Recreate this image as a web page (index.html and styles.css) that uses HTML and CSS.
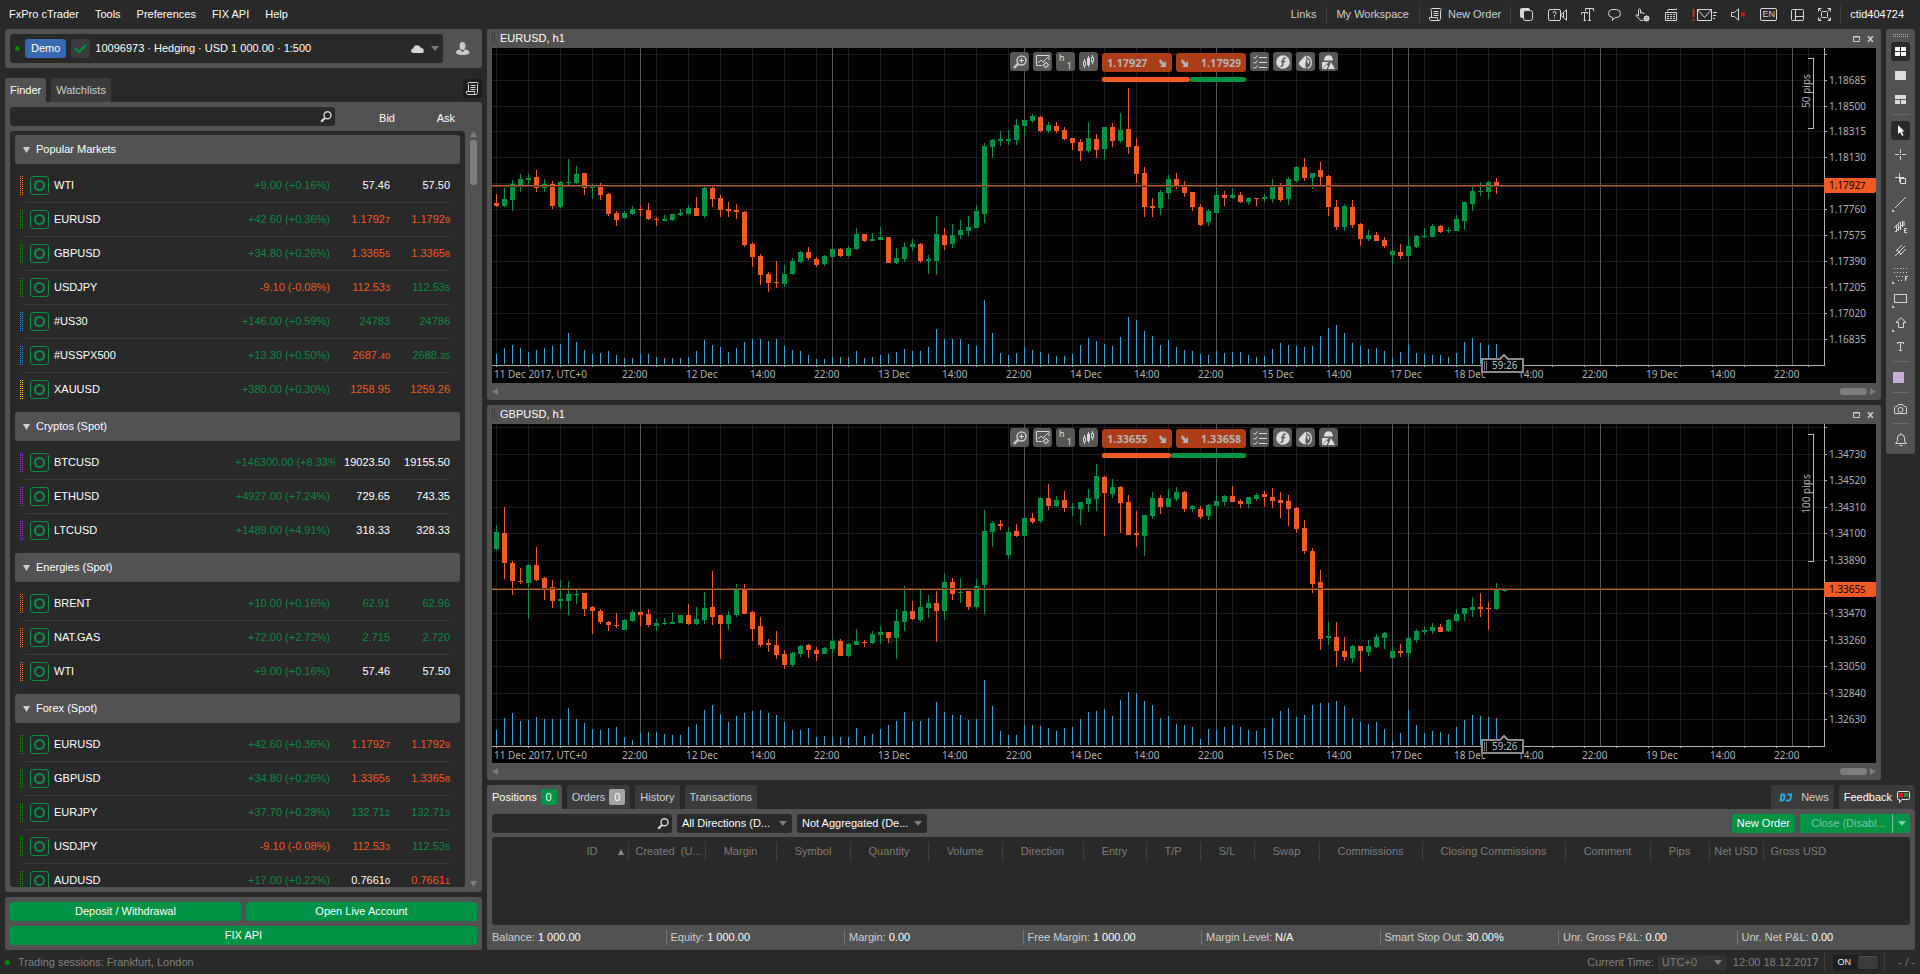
FILE: index.html
```html
<!DOCTYPE html>
<html lang="en">
<head>
<meta charset="utf-8">
<title>FxPro cTrader</title>
<link rel="stylesheet" href="styles.css">
</head>
<body>
<div class="app">
  <header class="topbar">
    <nav class="menu" aria-label="Main">
      <button>FxPro cTrader</button>
      <button>Tools</button>
      <button>Preferences</button>
      <button>FIX API</button>
      <button>Help</button>
    </nav>
    <div class="top-tools">
      <button class="top-link">Links</button>
      <span class="rule"></span>
      <button class="top-link">My Workspace</button>
      <span class="rule"></span>
      <button class="top-link with-icon">
        <svg class="line" width="13" height="13" viewBox="0 0 13 13"><path d="M2.500 9.500V2.500L1.500 1.500L2.500.5H11.500L12.500 1.500L11.500 2.500V10.500L10.500 12.500H1.500L.5 11.500V9.500H8.500V11.500L9.500 12.500M4.500 3.500H9.500M4.500 5.500H9.500M4.500 7.500H9.500"/></svg>
        New Order
      </button>
      <span class="rule"></span>
      <div class="top-icons">
        <button aria-label="Copy"><svg width="14" height="13" viewBox="0 0 14 13"><rect x="0" y="0" width="10" height="10" rx="2" fill="#d8d8d8"/><rect x="3.500" y="2.500" width="9" height="10" rx="2" fill="#292929" stroke="#d8d8d8"/></svg></button>
        <button aria-label="Video help"><svg class="line" width="19" height="12" viewBox="0 0 19 12"><rect x=".5" y=".5" width="12" height="11" rx="1.500"/><path d="M12.500 6 18.500.8V11.200ZM15.500 3.500V8.500M5 4Q5 2.500 6.500 2.500T8 4Q8 5 6.500 6V7.500M6.500 8.500V9.500"/></svg></button>
        <button aria-label="Text size"><svg class="line" width="13" height="13" viewBox="0 0 13 13"><path d="M4.500 3V.5H12.500V3M8.500.5V12.500M7 12.500H10M.5 6.500V4.500H6.500V6M3.500 4.500V12.500M2.500 12.500H5"/></svg></button>
        <button aria-label="Chat"><svg class="line" width="13" height="12" viewBox="0 0 13 12"><path d="M4.500 8.500V11.500L7 8.500H9Q12.500 8 12.500 4.500T8.500.5H4Q.5 1 .5 4.500T4.500 8.500Z"/></svg></button>
        <button aria-label="Quick trade"><svg class="line" width="15" height="14" viewBox="0 0 15 14"><path d="M8.500 12.500H6L1.500 8.500Q.5 7 1.500 6.500L3.500 8V1.500Q4.500 0 5.500 1.500V5.500M5.500 4.500Q7.500 3.500 7.500 5.500M7.500 5Q9 4.500 9.500 6"/><circle cx="11.500" cy="10.500" r="2.300"/><path d="M11.500 7V14M8 10.500H15M9 8 14 13M14 8 9 13" stroke-width=".8"/></svg></button>
        <button aria-label="Terminal"><svg class="line" width="14" height="13" viewBox="0 0 14 13"><path d="M1.500 4.500H12.500V12.500H1.500ZM3.500 3.500V2.500Q3.500 1.500 5 1.500H12.500V.5M3 6.500H11M3 8.500H11M3 10.500H11"/><path d="M5.500 5V12M8.500 5V12" stroke="#292929"/></svg></button>
        <button aria-label="Messages"><svg class="line" width="25" height="12" viewBox="0 0 25 12"><path d="M1.500 0V8M1.500 10V12" stroke="#c1342a" stroke-width="2"/><path d="M5.500.5H19.500V11.500H5.500ZM5.500.5 12.500 8.500 19.500.5M21 3.500H25M21 6.500H24M21 9.500H23"/></svg></button>
        <button aria-label="Sound"><svg class="line" width="15" height="13" viewBox="0 0 15 13"><path d="M.5 4.500H3.500L7.500.8V12.200L3.500 8.500H.5Z"/><path d="M10 4.500 14 8.500M14 4.500 10 8.500" stroke="#d01f1f" stroke-width="1.500"/></svg></button>
        <button class="lang" aria-label="Language">EN</button>
        <button aria-label="Layout"><svg class="line" width="13" height="12" viewBox="0 0 13 12"><rect x=".5" y=".5" width="12" height="11" rx="1"/><path d="M4.500.5V11.500M4.500 7.500H12.500"/></svg></button>
        <button aria-label="Full screen"><svg class="line" width="13" height="13" viewBox="0 0 13 13"><rect x="3.500" y="3.500" width="6" height="6" rx="1"/><path d="M.5 3.500V.5H3.500M9.500.5H12.500V3.500M12.500 9.500V12.500H9.500M3.500 12.500H.5V9.500M1 1 3 3M12 1 10 3M12 12 10 10M1 12 3 10"/></svg></button>
      </div>
      <span class="rule"></span>
      <button class="user-id">ctid404724</button>
    </div>
  </header>

  <div class="body">
    <aside class="side">
      <section class="card account">
        <div class="account-box">
          <span class="dot"></span>
          <span class="demo">Demo</span>
          <span class="check"><svg width="13" height="9" viewBox="0 0 13 9"><path d="M1 4.500 5 8 12 .8" fill="none" stroke="#009245" stroke-width="2"/></svg></span>
          <span class="account-text">10096973 · Hedging · USD 1 000.00 · 1:500</span>
          <svg class="cloud" width="13" height="8" viewBox="0 0 13 8"><path d="M2.500 8Q0 8 0 5.800T2.300 3.500Q3 .3 6 .3T9.800 3Q12.800 3.200 12.800 5.700T10.500 8Z" fill="#d6d6d6"/></svg>
          <svg width="8" height="5" viewBox="0 0 8 5"><path d="M0 0H8L4 5Z" fill="#7d7d7d"/></svg>
        </div>
        <button class="person" aria-label="Profile"><svg width="14" height="14" viewBox="0 0 14 14"><ellipse cx="6.500" cy="4" rx="3" ry="4" fill="#c9c9c9"/><path d="M0 11Q0 7.500 4 7.500L6.500 10 9 7.500Q13 7.500 13.500 11 12 13 6.800 13T0 11Z" fill="#c9c9c9"/></svg></button>
      </section>

      <div class="tabs side-tabs" role="tablist">
        <button class="tab on" role="tab">Finder</button>
        <button class="tab" role="tab">Watchlists</button>
        <button class="notes" aria-label="Orders list"><svg class="line" width="13" height="13" viewBox="0 0 13 13"><path d="M2.500 9.500V2.500L1.500 1.500L2.500.5H11.500L12.500 1.500L11.500 2.500V10.500L10.500 12.500H1.500L.5 11.500V9.500H8.500V11.500L9.500 12.500M4.500 3.500H9.500M4.500 5.500H9.500M4.500 7.500H9.500"/></svg></button>
      </div>
      <section class="card finder">
        <div class="finder-head">
          <label class="search"><input type="search" aria-label="Find symbol"><svg width="12" height="12" viewBox="0 0 12 12"><circle cx="7.500" cy="4.200" r="3.500" fill="none" stroke="#d6d6d6" stroke-width="1.400"/><path d="M5 7 1.200 10.800" stroke="#d6d6d6" stroke-width="2.200"/></svg></label>
          <span class="col-bid">Bid</span>
          <span class="col-ask">Ask</span>
        </div>
        <div class="finder-main">
          <div class="symbols" id="symbols"></div>
          <div class="vscroll">
            <svg width="7" height="6" viewBox="0 0 7 6"><path d="M3.500 0 7 6H0Z" fill="#7d7d7d"/></svg>
            <span class="vthumb"></span>
            <svg class="down" width="7" height="6" viewBox="0 0 7 6"><path d="M3.500 6 7 0H0Z" fill="#7d7d7d"/></svg>
          </div>
        </div>
      </section>

      <section class="card funding">
        <button class="green">Deposit / Withdrawal</button>
        <button class="green">Open Live Account</button>
        <button class="green wide">FIX API</button>
      </section>
    </aside>

    <main class="main">
      <div class="upper">
        <div class="charts" id="charts"></div>
        <div class="toolbar" role="toolbar" aria-label="Chart tools">
          <span class="grip"></span>
          <button class="on" aria-label="Grid"><svg width="13" height="13" viewBox="0 0 13 13" fill="#fff"><path d="M1 2H6V6H1ZM7 2H12V6H7ZM1 7H6V11H1ZM7 7H12V11H7Z"/></svg></button>
          <button aria-label="Single"><svg width="11" height="9" viewBox="0 0 11 9"><path d="M0 0H11V9H0Z" fill="#dcdcdc"/></svg></button>
          <button aria-label="Split"><svg width="11" height="9" viewBox="0 0 11 9"><path d="M0 0H11V4H0ZM0 5H5V9H0ZM6 5H11V9H6Z" fill="#dcdcdc"/></svg></button>
          <span class="hr"></span>
          <button class="on" aria-label="Pointer"><svg width="8" height="11" viewBox="0 0 8 11"><path d="M1 0 7.500 6.500H4.800L6.500 10.300 5 11 3.300 7.200 1 9Z" fill="#fff"/></svg></button>
          <button aria-label="Crosshair"><svg class="line" width="11" height="11" viewBox="0 0 11 11"><path d="M5.500 0V4M5.500 7V11M0 5.500H4M7 5.500H11M5 5.500H6"/></svg></button>
          <button aria-label="Measure"><svg class="line" width="11" height="11" viewBox="0 0 11 11"><path d="M4.500 0V9M0 4.500H9"/><rect x="5.500" y="5.500" width="5" height="5" fill="#525252"/></svg></button>
          <button class="more" aria-label="Trend line"><svg class="line" width="11" height="11" viewBox="0 0 11 11"><path d="M0 11 11 0"/></svg></button>
          <button aria-label="Equidistant channel"><svg class="line" width="14" height="12" viewBox="0 0 14 12"><path d="M0 7 6 1M2.500 5V11M4.500 3.500V9.500M6.500 1V9M8.500 0V6M1 11 8 4M10 0V5M13 7.500H10.500V11.500H13M10.500 9.500H12.500"/></svg></button>
          <button aria-label="Andrews pitchfork"><svg class="line" width="11" height="11" viewBox="0 0 11 11"><path d="M0 11 4 7M1 6 7 0M3 8 10 1M5 10 11 4M2 5 6 9"/></svg></button>
          <button class="more" aria-label="Fibonacci"><svg class="line" width="14" height="14" viewBox="0 0 14 14" shape-rendering="crispEdges"><path d="M0 .5H14M0 4.500H14M2 8.500H10M4 12.500H10" stroke-dasharray="1 2"/><path d="M11.500 13V8.500H14M11.500 10.500H13"/></svg></button>
          <button class="more" aria-label="Rectangle"><svg class="line" width="13" height="9" viewBox="0 0 13 9"><rect x=".5" y=".5" width="12" height="8"/></svg></button>
          <button class="more" aria-label="Arrow"><svg class="line" width="12" height="11" viewBox="0 0 12 11"><path d="M6 .7 11 5.500H8.500V10.500H3.500V5.500H1Z"/></svg></button>
          <button aria-label="Text"><svg class="line" width="7" height="9" viewBox="0 0 7 9"><path d="M.5 2V.5H6.500V2M3.500.5V8.500M2 8.500H5"/></svg></button>
          <span class="hr"></span>
          <button class="swatch" aria-label="Colour"><span></span></button>
          <span class="hr"></span>
          <button aria-label="Snapshot"><svg class="line" width="13" height="10" viewBox="0 0 13 10"><path d="M.5 3.500Q.5 2.500 1.500 2.500H3L4.500.5H8.500L10 2.500H11.500Q12.500 2.500 12.500 3.500V9.500H.5Z"/><circle cx="6.500" cy="5.800" r="2.500"/></svg></button>
          <span class="hr"></span>
          <button aria-label="Alerts"><svg class="line" width="12" height="13" viewBox="0 0 12 13"><path d="M.5 10.500H11.500L9.500 8V5Q9.500 1.500 6 1.500T2.500 5V8ZM6 0V1.500M4.500 12.500H7.500"/></svg></button>
        </div>
      </div>

      <section class="lower">
        <div class="tabs" role="tablist">
          <button class="tab on" role="tab">Positions <span class="badge">0</span></button>
          <button class="tab" role="tab">Orders <span class="badge grey">0</span></button>
          <button class="tab" role="tab">History</button>
          <button class="tab" role="tab">Transactions</button>
          <button class="tab news" role="tab"><svg width="14" height="9" viewBox="0 0 14 9"><path d="M2.500 1.500H4.500Q5.800 1.500 5.500 3.500L5.200 5.500Q4.800 7.500 3.500 7.500H1.500ZM8.500 1.500H12.200L11.500 6Q11.200 7.500 9.500 7.500H7" fill="none" stroke="#29abe2" stroke-width="2"/></svg>News</button>
          <button class="tab feedback" role="tab">Feedback<svg width="13" height="12" viewBox="0 0 13 12"><path d="M2.500 8.500H1.500Q.5 8.500.5 7.500V1.500Q.5.5 1.500.5H11.500Q12.500.5 12.500 1.500V7.500Q12.500 8.500 11.500 8.500H5L2.500 11.500Z" fill="none" stroke="#e6e6e6"/><path d="M2 2H6V6H2Z" fill="#e01b1b"/><path d="M7 2H11V6H7Z" fill="#009245"/></svg></button>
        </div>
        <div class="card trade">
          <div class="filters">
            <label class="search"><input type="search" aria-label="Search positions"><svg width="12" height="12" viewBox="0 0 12 12"><circle cx="7.500" cy="4.200" r="3.500" fill="none" stroke="#d6d6d6" stroke-width="1.400"/><path d="M5 7 1.200 10.800" stroke="#d6d6d6" stroke-width="2.200"/></svg></label>
            <span class="pick directions"><select aria-label="Directions"><option>All Directions (D...</option></select></span>
            <span class="pick aggregation"><select aria-label="Aggregation"><option>Not Aggregated (De...</option></select></span>
            <button class="green new-order">New Order</button>
            <span class="split"><button class="green close" disabled>Close (Disabl...</button><button class="green arrow" aria-label="Close options"><svg width="8" height="5" viewBox="0 0 8 5"><path d="M0 0H8L4 5Z" fill="#7fc8a1"/></svg></button></span>
          </div>
          <div class="grid-box">
            <table class="positions">
              <thead><tr>
                <th><span>ID <svg width="6" height="6" viewBox="0 0 6 6"><path d="M3 0 6 6H0Z" fill="#8a8a8a"/></svg></span></th>
                <th>Created&nbsp; (U...</th><th>Margin</th><th>Symbol</th><th>Quantity</th><th>Volume</th><th>Direction</th><th>Entry</th><th>T/P</th><th>S/L</th><th>Swap</th><th>Commissions</th><th>Closing Commissions</th><th>Comment</th><th>Pips</th><th>Net USD</th><th>Gross USD</th>
              </tr></thead>
            </table>
          </div>
          <div class="totals">
            <span>Balance: <b>1 000.00</b></span>
            <span>Equity: <b>1 000.00</b></span>
            <span>Margin: <b>0.00</b></span>
            <span>Free Margin: <b>1 000.00</b></span>
            <span>Margin Level: <b>N/A</b></span>
            <span>Smart Stop Out: <b>30.00%</b></span>
            <span>Unr. Gross P&amp;L: <b>0.00</b></span>
            <span>Unr. Net P&amp;L: <b>0.00</b></span>
          </div>
        </div>
      </section>
    </main>
  </div>

  <footer class="footer">
    <span class="dot"></span>
    <span class="sessions">Trading sessions: Frankfurt, London</span>
    <label class="clock" for="tz">Current Time:</label>
    <span class="pick tz"><select id="tz"><option>UTC+0</option></select></span>
    <span class="now">12:00 18.12.2017</span>
    <span class="rule"></span>
    <button class="toggle" aria-pressed="true"><span>ON</span><i></i></button>
    <span class="rule"></span>
    <span class="ping">- / -</span>
  </footer>
</div>
<script src="app.js"></script>
</body>
</html>
```
FILE: styles.css
```css
*, *::before, *::after { box-sizing: border-box; }

:root {
  --bg: #292929;
  --panel: #525252;
  --green: #009245;
  --orange: #f15a24;
  --text: #fff;
  --soft: #cfcfcf;
  --dim: #808080;
}

body {
  margin: 0;
  background: var(--bg);
  color: var(--text);
  font: 11px/15px "Liberation Sans", Arial, sans-serif;
}

button, input, select {
  font: inherit;
  color: inherit;
  background: none;
  border: 0;
  padding: 0;
  margin: 0;
}

button { white-space: nowrap; }
svg { display: block; flex: none; }
.line { fill: none; stroke: #d8d8d8; stroke-width: 1; }

.app { display: flex; flex-direction: column; height: 100vh; overflow: hidden; }

/* Top bar */
.topbar {
  display: flex;
  flex: 0 0 29px;
  align-items: center;
  justify-content: space-between;
  padding: 0 16px 0 9px;
}
.menu { display: flex; gap: 16px; }
.top-tools { display: flex; align-items: center; gap: 9px; color: var(--soft); }
.top-link { padding-right: 1px; }
.with-icon { display: flex; align-items: center; gap: 6px; padding: 0; }
.rule { width: 1px; height: 18px; background: #404040; }
.top-icons { display: flex; align-items: center; gap: 14px; }
.lang {
  width: 17px;
  height: 13px;
  border: 1px solid #d8d8d8;
  border-radius: 2px;
  font-size: 9px;
  line-height: 11px;
}
.user-id { color: #fff; }

/* Frame */
.body { display: flex; flex: 1; gap: 5px; padding: 0 5px; min-height: 0; }
.card { background: var(--panel); border-radius: 3px; }
.side { display: flex; flex: 0 0 477px; flex-direction: column; min-height: 0; }
.main { display: flex; flex: 1; flex-direction: column; gap: 5px; min-width: 0; }

/* Account */
.account { display: flex; flex: 0 0 39px; padding: 5px; }
.account-box {
  display: flex;
  flex: 1;
  align-items: center;
  gap: 5px;
  padding: 0 4px 0 5px;
  background: var(--bg);
  border-radius: 3px;
}
.dot { width: 5px; height: 5px; border-radius: 50%; background: #008a00; }
.demo, .check { height: 19px; border-radius: 3px; }
.demo { padding: 2px 6px; background: #3769b3; }
.check { display: flex; align-items: center; justify-content: center; width: 19px; background: #3b3b3b; }
.account-text { flex: 1; }
.cloud { margin-right: 2px; }
.person { width: 34px; display: flex; align-items: center; justify-content: center; padding-left: 5px; }

/* Tabs */
.tabs { display: flex; flex: 0 0 24px; gap: 5px; }
.side-tabs { margin-top: 10px; }
.tab {
  display: flex;
  align-items: center;
  gap: 4px;
  height: 24px;
  padding: 0 5px;
  background: #3b3b3b;
  border-radius: 3px 3px 0 0;
  color: var(--soft);
}
.tab.on { background: var(--panel); color: #fff; }
.notes {
  display: flex;
  align-items: center;
  justify-content: center;
  width: 19px;
  height: 19px;
  margin: 1px 0 0 auto;
  background: #1d1d1d;
  border-radius: 2px;
}
.badge {
  width: 16px;
  height: 16px;
  background: var(--green);
  border-radius: 2px;
  color: #fff;
  line-height: 16px;
  text-align: center;
}
.badge.grey { background: #a3a3a3; }
.news { margin-left: auto; gap: 8px; padding-left: 8px; }
.feedback { gap: 5px; color: #fff; }

/* Finder */
.finder { display: flex; flex: 1; flex-direction: column; min-height: 0; padding: 5px 0 5px 5px; border-radius: 0 3px 3px 3px; }
.finder-head { display: flex; flex: 0 0 19px; margin-bottom: 5px; }
.search {
  display: flex;
  align-items: center;
  flex: 1;
  height: 19px;
  padding-right: 3px;
  background: var(--bg);
  border-radius: 3px;
}
.search input { flex: 1; min-width: 0; padding: 0 5px; outline: 0; appearance: none; }
.col-bid, .col-ask { width: 60px; padding-top: 4px; text-align: right; }
.col-ask { margin-right: 27px; }
.finder-main { display: flex; flex: 1; min-height: 0; }
.symbols { flex: 1; min-width: 0; overflow: hidden; padding: 4px 5px; background: var(--bg); border-radius: 3px; }
.group {
  display: flex;
  align-items: center;
  gap: 6px;
  width: 100%;
  height: 29px;
  padding-left: 8px;
  background: var(--panel);
  border-radius: 3px;
}
.rows { width: 100%; padding: 5px; list-style: none; margin: 0; }
.row { display: flex; align-items: center; height: 34px; border-bottom: 1px solid transparent; position: relative; }
.row::after {
  content: "";
  position: absolute;
  left: 5px;
  right: 5px;
  bottom: -1px;
  height: 1px;
  background: #3b3b3b;
}
.row:last-child::after { display: none; }
.strip {
  width: 3px;
  height: 19px;
  background:
    linear-gradient(90deg, transparent 1px, var(--bg) 1px 2px, transparent 2px),
    repeating-linear-gradient(currentColor 0 1px, transparent 1px 2px);
}
.ring {
  display: flex;
  align-items: center;
  justify-content: center;
  width: 19px;
  height: 19px;
  margin: 0 5px 0 7px;
  border: 1px solid #0d8f48;
  border-radius: 3px;
}
.ring::before { content: ""; width: 11px; height: 11px; border: 2px solid #0d8f48; border-radius: 50%; }
.name { flex: 1; }
.change { width: 105px; overflow: hidden; text-align: right; padding-right: 5px; white-space: nowrap; }
.change.long { padding-right: 0; text-align: left; width: 100px; }
.price { width: 60px; text-align: right; margin-left: -5px; }
.price:last-child { margin: 0 5px 0 0; }
.price small { font-size: 9px; line-height: 1; }
.up { color: #0d8a45; }
.down-price { color: var(--orange); }
.vscroll { display: flex; flex-direction: column; align-items: center; width: 17px; gap: 3px; }
.vthumb { width: 7px; height: 45px; background: #7d7d7d; border-radius: 3px; }
.vscroll .down { margin-top: auto; }

/* Funding */
.funding { display: grid; grid-template-columns: 1fr 1fr; gap: 5px; margin-top: 5px; padding: 5px; }
.green { height: 19px; background: var(--green); border-radius: 3px; color: #fff; }
.wide { grid-column: span 2; }

/* Charts */
.upper { display: flex; flex: 1; gap: 5px; min-height: 0; align-items: flex-start; }
.charts { display: flex; flex: 1; flex-direction: column; gap: 5px; min-width: 0; height: 100%; }
.chart { display: flex; flex: 1 1 371px; flex-direction: column; min-height: 0; padding: 0 5px; }
.chart:last-child { flex-basis: 375px; }
.chart-head { display: flex; flex: 0 0 19px; align-items: center; gap: 5px; }
.chart-head h2 { flex: 1; margin: 0; font-size: 11px; font-weight: normal; }
.chart-head button { margin-right: 2px; }
.drag {
  width: 3px;
  height: 11px;
  background:
    linear-gradient(90deg, transparent 1px, var(--panel) 1px 2px, transparent 2px),
    repeating-linear-gradient(#2b2b2b 0 1px, transparent 1px 2px);
}
.canvas { position: relative; flex: 1; min-height: 0; overflow: hidden; background: #000; }
.plot { position: absolute; inset: 0; }
.plot text { font: 10px "Noto Sans", sans-serif; fill: #b0b0b0; }
.plot .on-price { fill: #000; }
.plot .on-price tspan { font-size: 9px; }
.plot .countdown { font-size: 10px; fill: #b8c4cc; }
.chart-tools {
  position: absolute;
  top: 4px;
  left: 0;
  right: 20px;
  display: flex;
  justify-content: center;
  gap: 4px;
}
.ctool {
  display: flex;
  align-items: center;
  justify-content: center;
  width: 19px;
  height: 19px;
  background: #575757;
  border-radius: 3px;
}
.period { justify-content: space-between; padding: 0 3px; font: 9px/11px "Noto Sans", sans-serif; color: #ddd; }
.period span:first-child { align-self: flex-start; }
.period span:last-child { align-self: flex-end; }
.quotes { display: grid; grid-template-columns: 70px 70px; gap: 5px 4px; padding-top: 1px; }
.quote {
  display: flex;
  align-items: center;
  justify-content: space-between;
  height: 19px;
  padding: 0 5px;
  background: #ab3e19;
  border-radius: 3px;
  color: #b4b4b4;
  font: bold 11px/16px "Noto Sans", sans-serif;
}
.quote small { font-size: 10px; line-height: 1; }
.mood { grid-column: span 2; display: flex; }
.mood span { height: 5px; border-radius: 2px; background: var(--green); flex: 1; }
.mood span:first-child { flex: none; background: var(--orange); }
.hscroll { display: flex; flex: 0 0 17px; align-items: center; gap: 3px; }
.hthumb { width: 27px; height: 7px; margin-left: auto; background: #7d7d7d; border-radius: 3px; }

/* Drawing toolbar */
.toolbar {
  display: flex;
  flex-direction: column;
  align-items: center;
  gap: 5px;
  width: 29px;
  padding: 5px 0;
  background: var(--panel);
  border-radius: 3px;
}
.toolbar button { position: relative; display: flex; align-items: center; justify-content: center; width: 19px; height: 19px; border-radius: 3px; }
.toolbar .on { background: #292929; }
.toolbar .more::after { content: ""; position: absolute; left: 1px; bottom: 0; border-left: 3px solid #d8d8d8; border-top: 3px solid transparent; }
.grip {
  width: 15px;
  height: 3px;
  background:
    linear-gradient(transparent 1px, var(--panel) 1px 2px, transparent 2px),
    repeating-linear-gradient(90deg, #b0b0b0 0 1px, transparent 1px 2px);
}
.hr { width: 18px; height: 1px; margin-bottom: 1px; background: #6a6a6a; }
.swatch span { width: 11px; height: 11px; margin-right: 4px; background: #c9aedb; }

/* Positions */
.lower { flex: 0 0 165px; }
.trade { padding: 5px 5px 0; border-radius: 0 3px 3px 3px; }
.filters { display: flex; gap: 5px; }
.filters .search { flex: 0 0 180px; }
.pick { position: relative; display: flex; height: 19px; background: var(--bg); border-radius: 3px; }
.pick select { width: 100%; padding: 0 5px; appearance: none; outline: 0; }
.pick::after {
  content: "";
  position: absolute;
  right: 5px;
  top: 7px;
  border: 4px solid transparent;
  border-top: 5px solid #7d7d7d;
  border-bottom: 0;
  pointer-events: none;
}
.directions { width: 115px; }
.aggregation { width: 130px; }
.new-order { margin-left: auto; padding: 0 5px; }
.split { display: flex; gap: 1px; background: #6cc095; border-radius: 3px; }
.close { width: 92px; border-radius: 3px 0 0 3px; color: #7fc8a1; padding-left: 5px; }
.arrow { display: flex; align-items: center; justify-content: center; width: 17px; border-radius: 0 3px 3px 0; }
.grid-box { height: 88px; margin-top: 4px; padding-top: 5px; background: var(--bg); border-radius: 3px; }
.positions { width: 100%; table-layout: fixed; border-collapse: collapse; color: #7d7d7d; }
.positions th { height: 19px; padding: 0; border-right: 1px solid #404040; font-weight: normal; white-space: nowrap; width: 5%; }
.positions th span { display: flex; align-items: center; justify-content: flex-end; gap: 20px; padding-right: 4px; }
.positions th:nth-child(1) { width: 136px; }
.positions th:nth-child(2) { width: 77px; text-align: left; padding-left: 7px; }
.positions th:nth-child(3) { width: 71px; }
.positions th:nth-child(4) { width: 74px; }
.positions th:nth-child(5) { width: 78px; }
.positions th:nth-child(6) { width: 74px; }
.positions th:nth-child(7) { width: 81px; }
.positions th:nth-child(8) { width: 63px; }
.positions th:nth-child(9) { width: 54px; }
.positions th:nth-child(10) { width: 54px; }
.positions th:nth-child(11) { width: 65px; }
.positions th:nth-child(12) { width: 103px; }
.positions th:nth-child(13) { width: 143px; }
.positions th:nth-child(14) { width: 85px; }
.positions th:nth-child(15) { width: 59px; }
.positions th:nth-child(16) { width: 54px; }
.positions th:nth-child(17) { width: auto; border: 0; text-align: left; padding-left: 7px; }
.totals { display: grid; grid-template-columns: repeat(8, 1fr); height: 25px; margin: 0 -5px; align-items: center; color: var(--soft); }
.totals span { padding-left: 4px; border-left: 1px solid #757575; }
.totals span:first-child { border-color: transparent; }
.totals b { color: #fff; font-weight: normal; }

/* Footer */
.footer { display: flex; flex: 0 0 24px; align-items: center; padding: 0 5px; color: var(--dim); }
.sessions { flex: 1; margin-left: 8px; }
.tz { width: 69px; height: 15px; margin: 0 6px 0 4px; background: #333; }
.tz select { padding: 0 4px; }
.tz::after { top: 5px; }
.now { margin-right: 5px; }
.toggle { display: flex; align-items: center; justify-content: space-between; width: 46px; height: 15px; margin: 0 5px 0 8px; padding: 1px 1px 1px 5px; background: #1f1f1f; border-radius: 2px; color: #eee; font-size: 9px; line-height: 12px; }
.toggle i { width: 20px; height: 13px; background: #3b3b3b; border-top: 1px solid #555; border-radius: 2px; }
.ping { margin-left: 14px; }
```
FILE: app.js
```js
/* Symbol list: name, change, bid, ask. A "~" marks the small trailing digits. */
const GROUPS = [
  ["Popular Markets", [
    ["WTI", "+9.00 (+0.16%)", "57.46", "57.50", "#f7741c"],
    ["EURUSD", "+42.60 (+0.36%)", "-1.1792~7", "-1.1792~9", "#0a9a0a"],
    ["GBPUSD", "+34.80 (+0.26%)", "-1.3365~5", "-1.3365~8", "#0a9a0a"],
    ["USDJPY", "-9.10 (-0.08%)", "-112.53~3", "+112.53~5", "#0a9a0a"],
    ["#US30", "+146.00 (+0.59%)", "+24783", "+24786", "#2196f3"],
    ["#USSPX500", "+13.30 (+0.50%)", "-2687.~40", "+2688.~35", "#2196f3"],
    ["XAUUSD", "+380.00 (+0.30%)", "-1258.95", "-1259.26", "#f2e12a"]]],
  ["Cryptos (Spot)", [
    ["BTCUSD", "+146300.00 (+8.33%)", "19023.50", "19155.50", "#a537e0"],
    ["ETHUSD", "+4927.00 (+7.24%)", "729.65", "743.35", "#a537e0"],
    ["LTCUSD", "+1489.00 (+4.91%)", "318.33", "328.33", "#a537e0"]]],
  ["Energies (Spot)", [
    ["BRENT", "+10.00 (+0.16%)", "+62.91", "+62.96", "#f7741c"],
    ["NAT.GAS", "+72.00 (+2.72%)", "+2.715", "+2.720", "#f7741c"],
    ["WTI", "+9.00 (+0.16%)", "57.46", "57.50", "#f7741c"]]],
  ["Forex (Spot)", [
    ["EURUSD", "+42.60 (+0.36%)", "-1.1792~7", "-1.1792~9", "#0a9a0a"],
    ["GBPUSD", "+34.80 (+0.26%)", "-1.3365~5", "-1.3365~8", "#0a9a0a"],
    ["EURJPY", "+37.70 (+0.28%)", "+132.71~2", "+132.71~3", "#0a9a0a"],
    ["USDJPY", "-9.10 (-0.08%)", "-112.53~3", "+112.53~5", "#0a9a0a"],
    ["AUDUSD", "+17.00 (+0.22%)", "0.7661~0", "-0.7661~1", "#0a9a0a"]]]
];

const tone = s => s[0] === "+" ? "up" : s[0] === "-" ? "down-price" : "";
function price(s) {
  const [big, small] = s.replace(/^[+-]/, "").split("~");
  return `<span class="price ${tone(s)}">${big}${small ? `<small>${small}</small>` : ""}</span>`;
}
document.getElementById("symbols").innerHTML = GROUPS.map(([title, rows]) => `
  <button class="group"><svg width="7" height="6" viewBox="0 0 7 6"><path d="M0 0H7L3.500 6Z" fill="#d0d0d0"/></svg>${title}</button>
  <ul class="rows">${rows.map(r => `
    <li class="row"><span class="strip" style="color:${r[4]}"></span><span class="ring"></span>
    <span class="name">${r[0]}</span><span class="change ${tone(r[1])}${r[1].length > 18 ? " long" : ""}">${r[1]}</span>
    ${price(r[2])}${price(r[3])}</li>`).join("")}</ul>`).join("");

/* Hourly bars: direction, then high, body top, body bottom and low in thirds of a pixel. */
const EUR = `r508,534,543,546 g490,522,543,546 g465,477,525,557 g447,462,480,500 g447,459,465,480 r435,456,489,500 g462,477,489,500 r468,477,543,551 g468,471,546,549 g402,471,474,486 g423,447,474,477 r444,444,489,510 g477,486,489,522 r474,486,510,524 r504,507,567,573 r558,564,585,603 g558,564,579,582 g543,552,567,570 r543,552,555,573 r534,555,582,585 r576,582,585,603 g570,582,588,588 g567,567,585,588 g552,564,570,573 g540,549,567,570 r516,549,573,573 g483,489,573,578 r486,489,522,546 r510,519,555,576 r531,552,558,576 r537,555,561,582 r558,561,660,666 r651,657,696,726 r687,693,750,780 r741,747,774,801 r708,771,774,789 g720,747,777,785 g699,708,747,750 g678,681,711,714 r666,681,699,705 r696,702,720,726 g690,693,717,723 g672,672,696,696 r669,672,693,696 g663,669,693,696 g609,627,672,675 r627,627,648,651 g624,642,648,648 g606,636,645,645 r636,636,714,714 g669,699,714,717 g651,666,702,711 g642,657,666,678 r654,657,708,714 g690,702,708,747 g573,627,708,750 r609,630,660,675 g597,630,657,669 g585,615,630,642 g573,606,618,633 g540,558,609,609 g354,363,567,594 g342,345,366,399 g318,342,348,362 g315,342,348,360 g282,300,345,360 g285,285,303,333 g267,273,288,294 r273,276,318,321 g291,300,318,324 r291,303,318,324 r306,315,342,345 r339,339,354,375 r342,351,378,408 g291,339,378,384 r327,342,375,399 g306,306,372,402 r294,306,348,366 g264,315,348,354 r189,312,366,387 r339,363,447,474 r426,444,546,576 r519,543,549,576 g495,501,549,570 g450,462,504,522 r444,462,486,492 r468,483,504,516 r501,501,546,558 r537,546,600,603 g552,558,591,603 g486,510,564,564 r498,510,519,543 g489,510,519,522 r501,510,531,534 g516,519,531,540 r519,519,522,543 g507,516,522,531 g462,483,522,534 r474,486,525,531 g456,462,522,540 g423,426,468,474 r399,426,459,468 g444,444,459,492 r411,435,456,480 r450,453,546,573 r525,546,606,615 g537,543,606,618 r525,546,600,609 r594,597,642,663 g615,630,642,648 r621,630,648,648 r636,645,663,669 g672,678,690,717 r657,681,693,702 g636,663,693,693 g630,633,666,669 g609,633,636,639 g597,603,636,636 r600,603,621,624 g606,615,618,624 g570,582,618,618 g531,531,588,615 g486,498,537,558 g471,498,501,513 g468,471,501,522 r459,471,483,507 r483,483,486,486`;
const GBP = `g375,396,447,453 r321,399,489,537 r483,489,543,585 r504,543,546,552 g492,495,549,657 r441,495,540,543 r531,534,564,600 r540,561,603,624 g540,597,603,627 g543,582,603,645 g570,582,585,612 r579,579,627,648 r618,621,633,702 r627,633,666,672 r663,666,675,693 r639,675,678,684 g657,660,690,690 g630,636,663,666 r636,636,645,678 r627,642,675,681 g657,669,678,693 g654,669,672,675 g636,666,672,672 g645,645,669,669 r612,645,672,675 g621,657,672,675 g576,624,660,672 r513,621,651,675 r645,645,672,777 g633,645,672,690 g552,570,645,651 r552,570,642,642 r633,636,687,723 r651,678,735,741 r717,729,735,756 r693,735,765,777 r750,762,795,807 g756,759,795,801 g735,738,762,771 r732,735,750,774 r741,750,762,783 g741,744,762,762 g714,723,747,762 r717,723,768,768 g729,732,768,771 g687,723,735,735 r720,726,729,741 g693,702,729,732 g678,696,705,732 r696,696,714,729 g627,663,714,777 g558,633,666,693 r603,633,657,660 g564,621,660,666 g585,609,624,654 r573,609,633,726 g522,546,633,660 r534,546,582,600 g534,576,579,609 r573,573,621,630 g537,558,621,627 g330,393,555,642 g363,369,396,441 r360,372,378,390 g381,396,465,477 r372,393,408,411 g354,354,408,408 r339,354,366,372 g291,294,363,369 r252,294,318,330 g288,300,318,321 r273,300,324,336 g309,321,324,348 g306,306,327,375 g267,294,312,336 g192,228,297,333 r228,231,279,408 g237,261,282,294 r258,261,309,399 r285,306,405,405 r333,399,405,441 g345,345,408,468 g276,294,348,357 r285,294,321,342 g267,294,321,321 g261,276,297,303 r273,276,327,336 g315,318,327,336 r318,327,351,357 g312,315,348,360 g285,303,318,327 g285,288,306,318 r258,288,306,306 r297,303,312,324 g291,291,312,324 g279,285,297,303 r273,282,291,321 r264,291,303,324 r276,300,309,354 r285,303,327,378 r321,324,387,399 r360,384,453,462 r444,453,552,579 r510,546,717,750 g666,708,714,735 r666,711,753,801 r711,753,771,783 g735,738,774,789 r738,738,753,816 g720,738,756,768 g702,711,741,744 g696,699,714,747 g738,753,774,774 r732,753,759,771 g705,714,759,777 g687,693,720,729 g678,690,696,705 g669,681,693,702 r672,681,696,696 g657,660,693,696 g627,642,663,666 g624,624,642,663 g591,621,630,651 r579,621,627,651 r606,624,627,690 g549,570,627,630 g567,570,573,576`;
const EUR_VOL = [987,969,960,969,981,975,969,963,957,924,951,975,987,984,978,990,999,999,987,987,996,999,999,999,996,978,945,960,966,981,969,951,942,942,948,942,963,975,978,990,1002,1002,996,996,996,978,999,996,990,987,981,972,978,978,966,912,942,942,942,957,963,825,924,984,990,984,966,975,981,987,993,993,987,960,939,948,957,963,936,876,885,918,933,960,945,966,975,978,987,990,978,984,981,981,990,996,993,972,954,960,963,966,963,933,909,900,924,954,963,972,969,978,999,981,960,984,987,990,990,996,984,951,939,954,960,957];
const GBP_VOL = [990,954,939,963,960,951,957,957,957,924,957,969,987,990,984,981,1011,1020,999,996,996,1002,1005,1005,981,972,930,915,942,966,948,939,933,930,939,945,966,990,990,984,1011,1008,1011,1011,1011,984,1008,1002,987,975,963,936,963,963,954,906,936,945,945,960,957,840,918,993,1005,1005,975,975,978,984,993,984,981,957,936,933,927,948,900,876,879,903,915,954,948,972,975,981,1017,987,990,981,975,981,990,993,984,954,933,924,951,945,915,909,909,903,918,954,966,972,966,987,1023,999,930,975,999,993,996,1002,981,960,945,948,951,954];

const CHARTS = [
  { title: "EURUSD, h1", bars: EUR, vol: EUR_VOL, shift: 23, volBase: 316, base: 317,
    grid: [6, 32, 58, 83, 109, 135, 161, 187, 213, 239, 265, 291],
    labels: ["", "1.18685", "1.18500", "1.18315", "1.18130", "", "1.17760", "1.17575", "1.17390", "1.17205", "1.17020", "1.16835"],
    line: 137, bid: ["1.1792", "7"], ask: ["1.1792", "9"], pips: "50 pips", ruler: [10, 80], pipsY: 43, sell: 88 },
  { title: "GBPUSD, h1", bars: GBP, vol: GBP_VOL, shift: 24, volBase: 321, base: 322,
    grid: [3, 30, 56, 83, 109, 136, 164, 189, 216, 242, 269, 295],
    labels: ["", "1.34730", "1.34520", "1.34310", "1.34100", "1.33890", "", "1.33470", "1.33260", "1.33050", "1.32840", "1.32630"],
    line: 165, bid: ["1.3365", "5"], ask: ["1.3365", "8"], pips: "100 pips", ruler: [10, 137], pipsY: 70, sell: 69 }
];
const TIMES = ["11 Dec 2017, UTC+0", "", "22:00", "12 Dec", "14:00", "22:00", "13 Dec", "14:00", "22:00", "14 Dec", "14:00", "22:00", "15 Dec", "14:00", "17 Dec", "18 Dec", "14:00", "22:00", "19 Dec", "14:00", "22:00"];
const SESSIONS = [148, 340, 532, 724, 900, 916, 1108, 1300];

const rect = (x, y, w, h, fill) => `<rect x="${x}" y="${y}" width="${w}" height="${h}" fill="${fill}"/>`;

function draw(c, width) {
  const plotW = width - 52;
  const out = [];
  for (let x = 4; x < plotW; x += 32) {
    out.push(rect(x, 0, 1, c.base, "#1c1c20"), rect(x, c.base, 1, 2, "#a0a0a0"));
  }
  c.grid.forEach(y => out.push(rect(0, y, plotW, 1, "#1c1c20"), rect(plotW, y, 3, 1, "#b0b0b0")));
  SESSIONS.forEach(x => out.push(rect(x, 0, 1, c.base, "#555")));
  c.vol.forEach((v, i) => {
    const y = Math.round(v / 3) - c.shift;
    out.push(rect(4 + i * 8, y, 1, c.volBase - y, "#2fa8e0"));
  });
  c.bars.split(" ").forEach((b, i) => {
    const fill = b[0] === "g" ? "#009245" : "#f15a24";
    const [hi, top, bot, lo] = b.slice(1).split(",").map(v => Math.round(v / 3) - c.shift);
    out.push(rect(4 + i * 8, hi, 1, Math.max(lo - hi, 1), fill), rect(2 + i * 8, top, 5, Math.max(bot - top, 1), fill));
  });
  out.push(rect(0, c.line, plotW, 1, "#b8622a"), rect(0, c.line + (c.shift === 23 ? 1 : -1), plotW, 1, "#4d3217"));
  out.push(rect(0, c.base, plotW + 1, 1, "#b0b0b0"), rect(plotW, 0, 1, c.base, "#b0b0b0"));
  c.labels.forEach((t, k) => out.push(`<text x="${plotW + 5}" y="${c.grid[k] + 4}">${t}</text>`));
  TIMES.forEach((t, k) => out.push(`<text x="${2 + k * 64}" y="${c.base + 13}">${t}</text>`));
  out.push(`<rect x="${plotW}" y="${c.line - 7}" width="52" height="15" rx="2" fill="#f15a24"/>`,
    `<text class="on-price" x="${plotW + 5}" y="${c.line + 4}">${c.bid[0]}<tspan>${c.bid[1]}</tspan></text>`);
  const [a, z] = c.ruler;
  out.push(`<path d="M${plotW - 16} ${a}.500H${plotW - 11}.500V${z}.500H${plotW - 16}" fill="none" stroke="#b8b8b8"/>`,
    `<text text-anchor="middle" transform="translate(${plotW - 14} ${c.pipsY}) rotate(-90)">${c.pips}</text>`);
  const t = c.base - 6;
  out.push(`<path d="M990 ${t}H1008L1012 ${t - 4}L1016 ${t}H1031V${t + 13}H990Z" fill="#000" stroke="#8a8a8a" stroke-width="2"/>`,
    rect(992, t + 2, 1, 9, "#777"), rect(994, t + 2, 1, 9, "#777"),
    `<text class="countdown" x="1000" y="${t + 10}">59:26</text>`);
  return out.join("");
}

const arrow = '<svg width="8" height="8" viewBox="0 0 8 8"><path d="M1 0 5 4 7 2V8H1L3 6 0 3Z" fill="#b4b4b4"/></svg>';
const quote = p => `<span>${p[0]}<small>${p[1]}</small></span>`;
const host = document.getElementById("charts");

host.innerHTML = CHARTS.map(c => `
<section class="card chart">
  <div class="chart-head"><span class="drag"></span><h2>${c.title}</h2>
    <button aria-label="Restore"><svg width="7" height="6" viewBox="0 0 7 6"><path d="M.5.5H6.500V5.500H.5ZM0 1H7" fill="none" stroke="#cfcfcf"/></svg></button>
    <button aria-label="Close"><svg width="7" height="6" viewBox="0 0 7 6"><path d="M1 0 6 6M6 0 1 6" stroke="#cfcfcf" stroke-width="1.500"/></svg></button>
  </div>
  <div class="canvas">
    <svg class="plot" width="100%" height="100%" shape-rendering="crispEdges" role="img" aria-label="${c.title}"></svg>
    <div class="chart-tools">
      <button class="ctool" aria-label="Zoom"><svg width="14" height="14" viewBox="0 0 14 14"><circle cx="8.500" cy="5.500" r="4.500" fill="none" stroke="#c4c4c4" stroke-width="1.600"/><path d="M6 5.500H11M8.500 3V8" stroke="#d8d8d8" stroke-width="1.200"/><path d="M5 9 1 13" stroke="#c4c4c4" stroke-width="2.600"/></svg></button>
      <button class="ctool" aria-label="Chart settings"><svg class="line" width="14" height="14" viewBox="0 0 14 14"><path d="M6 10.500H.5V.5H13V5M2 8 5 5 7 7 12 2"/><circle cx="10" cy="10" r="2"/><path d="M10 6.500V8M10 12V13.500M6.500 10H8M12 10H13.500M7.500 7.500 8.500 8.500M11.500 11.500 12.500 12.500M12.500 7.500 11.500 8.500M8.500 11.500 7.500 12.500"/></svg></button>
      <button class="ctool period" aria-label="Period h1"><span>h</span><span>1</span></button>
      <button class="ctool" aria-label="Chart type"><svg class="line" width="11" height="13" viewBox="0 0 11 13"><path d="M1.500 4V6M1.500 11V13M9.500 0V2M9.500 7V9M.5 6.500H2.500V10.500H.5ZM8.500 2.500H10.500V6.500H8.500Z"/><path d="M5.500 1V12"/><path d="M4 3H7V10H4Z" fill="#d8d8d8" stroke="none"/></svg></button>
      <div class="quotes">
        <button class="quote">${quote(c.bid)}${arrow}</button>
        <button class="quote">${arrow}${quote(c.ask)}</button>
        <div class="mood"><span style="width:${c.sell}px"></span><span></span></div>
      </div>
      <button class="ctool" aria-label="Objects"><svg class="line" width="14" height="14" viewBox="0 0 14 14"><path d="M6 2.500H14M6 7.500H14M6 12.500H14M.5 2 2 3.500 4.500.5M.5 7 2 8.500 4.500 5.500M.5 12 2 13.500 4.500 10.500"/></svg></button>
      <button class="ctool" aria-label="Indicators"><svg width="14" height="14" viewBox="0 0 14 14"><circle cx="7" cy="7" r="6.800" fill="#dcdcdc"/><path d="M9.800 3.200Q7.400 2.500 7.200 5L6.600 10Q6.300 11.800 4.600 11.200M5 6.500H9.300" fill="none" stroke="#575757" stroke-width="1.500"/></svg></button>
      <button class="ctool" aria-label="View"><svg width="13" height="14" viewBox="0 0 13 14"><path d="M7 .5Q8 3.500 6.800 7T7.500 13.500Q4 13.500 1.500 11T0 7.500Q1 6 3.500 3.500T7 .5Z" fill="#dcdcdc"/><path d="M8 1.500Q12.300 2.500 12.300 7.500T8.500 13" fill="none" stroke="#dcdcdc" stroke-width="1.300"/><path d="M8.300 4 10.500 5.500 9.500 9.500 8.300 7.500Z" fill="#dcdcdc"/></svg></button>
      <button class="ctool" aria-label="Detach"><svg width="13" height="14" viewBox="0 0 13 14"><path d="M2 5.500Q2.200.3 6.500.3T11 5.500ZM0 7H7L0 13.500ZM0 14 5 9.500 6 11 4.500 14ZM9 7 13 14H6Z" fill="#dcdcdc"/></svg></button>
    </div>
  </div>
  <div class="hscroll">
    <svg width="6" height="7" viewBox="0 0 6 7"><path d="M6 0V7L0 3.500Z" fill="#7d7d7d"/></svg>
    <span class="hthumb"></span>
    <svg width="6" height="7" viewBox="0 0 6 7"><path d="M0 0V7L6 3.500Z" fill="#7d7d7d"/></svg>
  </div>
</section>`).join("");

function paint() {
  host.querySelectorAll(".plot").forEach((svg, i) => {
    svg.innerHTML = draw(CHARTS[i], svg.parentElement.clientWidth);
  });
}
paint();
window.addEventListener("resize", paint);
```
